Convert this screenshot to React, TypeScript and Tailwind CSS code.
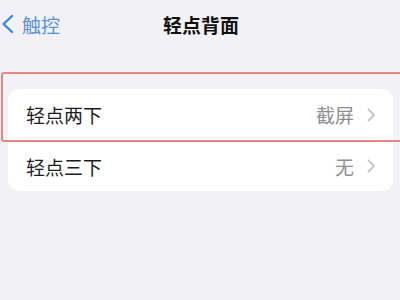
import React from "react";

const font = { fontFamily: '"Noto Sans CJK SC", "Noto Sans", sans-serif' };

function Chevron() {
  return (
    <svg width="9" height="14" viewBox="0 0 9 14" fill="none">
      <path d="M1.5 1.5 L7 7 L1.5 12.5" stroke="#c5c5c9" strokeWidth="1.8" strokeLinecap="round" strokeLinejoin="round" />
    </svg>
  );
}

export default function App() {
  return (
    <div className="relative w-[400px] h-[300px] bg-[#f2f1f6] overflow-hidden" style={font}>
      <div className="relative h-[48px] flex items-center">
        <div className="flex items-center pl-[1px] gap-[8px]">
          <svg width="13" height="20" viewBox="0 0 13 20" fill="none">
            <path d="M11 2 L2.5 10 L11 18" stroke="#3d80d9" strokeWidth="2.2" strokeLinecap="round" strokeLinejoin="round" />
          </svg>
          <span className="text-[19px] leading-none text-[#5a8fd9]">触控</span>
        </div>
        <div className="absolute inset-0 flex items-center justify-center">
          <span className="text-[19px] leading-none font-bold text-[#111] ml-[2px]">轻点背面</span>
        </div>
      </div>
      <div className="mt-[41px] ml-[8px] w-[385px] bg-white rounded-[11px] overflow-hidden">
        <div className="h-[51px] flex items-center pl-[18px] pr-[17px]">
          <span className="text-[19px] leading-none text-[#1c1c1e] flex-1">轻点两下</span>
          <span className="text-[19px] leading-none text-[#8e8e93] mr-[13px]">截屏</span>
          <Chevron />
        </div>
        <div className="ml-[18px] h-px bg-[#e4e4e8]" />
        <div className="h-[50px] flex items-center pl-[18px] pr-[17px]">
          <span className="text-[19px] leading-none text-[#1c1c1e] flex-1">轻点三下</span>
          <span className="text-[19px] leading-none text-[#8e8e93] mr-[13px]">无</span>
          <Chevron />
        </div>
      </div>
      <div className="absolute left-[1px] top-[72px] w-[420px] h-[70px] border-2 border-[#e88585] rounded-[3px]" />
    </div>
  );
}
